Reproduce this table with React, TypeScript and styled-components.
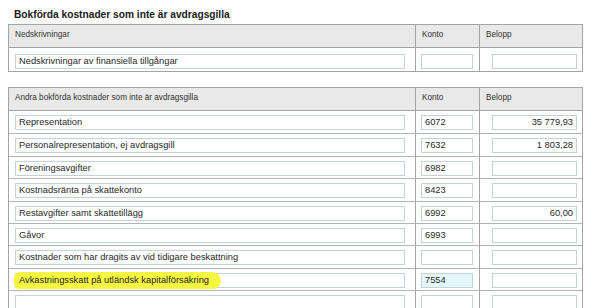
import styled, { createGlobalStyle } from "styled-components"

type Row = {
  label: string
  konto?: string
  belopp?: string
  marked?: boolean
  active?: boolean
}

const otherCosts: Row[] = [
  { label: "Representation", konto: "6072", belopp: "35 779,93" },
  { label: "Personalrepresentation, ej avdragsgill", konto: "7632", belopp: "1 803,28" },
  { label: "Föreningsavgifter", konto: "6982" },
  { label: "Kostnadsränta på skattekonto", konto: "8423" },
  { label: "Restavgifter samt skattetillägg", konto: "6992", belopp: "60,00" },
  { label: "Gåvor", konto: "6993" },
  { label: "Kostnader som har dragits av vid tidigare beskattning" },
  { label: "Avkastningsskatt på utländsk kapitalförsäkring", konto: "7554", marked: true, active: true },
  { label: "" },
]

export default function App() {
  return (
    <>
      <GlobalStyle />
      <Page>
        <Title>Bokförda kostnader som inte är avdragsgilla</Title>

        <Table>
          <HeadRow>
            <HeadCell>Nedskrivningar</HeadCell>
            <HeadCell>Konto</HeadCell>
            <HeadCell>Belopp</HeadCell>
          </HeadRow>
          <BodyRow $height={23}>
            <Cell $pad="6px 10px 0 6px">
              <Field>Nedskrivningar av finansiella tillgångar</Field>
            </Cell>
            <Cell $pad="6px 6px 0 5px">
              <Field />
            </Cell>
            <Cell $pad="6px 5px 0 12px">
              <Field />
            </Cell>
          </BodyRow>
        </Table>

        <Table $gap={15}>
          <HeadRow>
            <HeadCell>Andra bokförda kostnader som inte är avdragsgilla</HeadCell>
            <HeadCell>Konto</HeadCell>
            <HeadCell>Belopp</HeadCell>
          </HeadRow>
          {otherCosts.map((row, i) => (
            <BodyRow key={i} $height={22.4}>
              <Cell $pad="4px 10px 0 6px">
                <Field>
                  {row.marked ? <Marker>{row.label}</Marker> : row.label}
                </Field>
              </Cell>
              <Cell $pad="4px 6px 0 5px">
                <Field $active={row.active}>{row.konto}</Field>
              </Cell>
              <Cell $pad="4px 5px 0 12px">
                <Field $right>{row.belopp}</Field>
              </Cell>
            </BodyRow>
          ))}
        </Table>
      </Page>
    </>
  )
}

const GlobalStyle = createGlobalStyle`
  html, body {
    margin: 0;
    background: #ffffff;
    font-family: "Liberation Sans", Arial, sans-serif;
    color: #222222;
  }
`

const Page = styled.div`
  width: 600px;
  height: 308px;
  overflow: hidden;
  padding: 9px 0 0 8px;
  box-sizing: border-box;
`

const Title = styled.h1`
  margin: 0 0 3px 6px;
  font-size: 10.2px;
  line-height: 12px;
  font-weight: 700;
  color: #1a1a1a;
`

const Table = styled.div<{ $gap?: number }>`
  width: 575px;
  margin-top: ${({ $gap }) => $gap ?? 0}px;
  border: 1px solid #a3a3a3;
  box-sizing: border-box;
`

const columns = "406px 64px 1fr"

const HeadRow = styled.div`
  display: grid;
  grid-template-columns: ${columns};
  height: 22px;
  background: #e9e9e9;
  border-bottom: 1px solid #a3a3a3;
`

const HeadCell = styled.div`
  padding: 5px 0 0 6px;
  font-size: 8.2px;
  line-height: 10px;
  color: #333333;
  & + & {
    border-left: 1px solid #a3a3a3;
  }
`

const BodyRow = styled.div<{ $height: number }>`
  display: grid;
  grid-template-columns: ${columns};
  height: ${({ $height }) => $height}px;
  box-sizing: border-box;
  border-top: 1px solid #b3b3b3;
  &:nth-child(2) {
    border-top: none;
  }
`

const Cell = styled.div<{ $pad: string }>`
  padding: ${({ $pad }) => $pad};
  box-sizing: border-box;
  & + & {
    border-left: 1px solid #a3a3a3;
  }
`

const Field = styled.div<{ $right?: boolean; $active?: boolean }>`
  height: 15px;
  box-sizing: border-box;
  border: 1px solid #c2d3df;
  background: ${({ $active }) => ($active ? "#e4f8fc" : "#ffffff")};
  padding: 0 3px;
  font-size: 9.3px;
  line-height: 13px;
  color: #2a2a2a;
  white-space: nowrap;
  text-align: ${({ $right }) => ($right ? "right" : "left")};
`

const Marker = styled.span`
  display: inline-block;
  margin: -3px 0 0 -5px;
  padding: 2px 12px 2px 5px;
  line-height: 13px;
  background: #f5f542;
  border-radius: 7px 10px 9px 6px;
`
